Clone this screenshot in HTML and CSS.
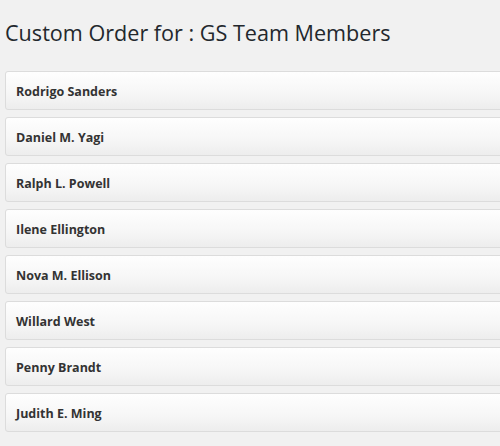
FILE: index.html
```html
<!DOCTYPE html>
<html>
<head>
<meta charset="utf-8">
<link rel="stylesheet" href="styles.css">
</head>
<body>
<div class="wrap">
  <h1 class="title">Custom Order for : GS Team Members</h1>
  <ul class="list">
    <li class="item">Rodrigo Sanders</li>
    <li class="item">Daniel M. Yagi</li>
    <li class="item">Ralph L. Powell</li>
    <li class="item">Ilene Ellington</li>
    <li class="item">Nova M. Ellison</li>
    <li class="item">Willard West</li>
    <li class="item">Penny Brandt</li>
    <li class="item">Judith E. Ming</li>
  </ul>
</div>
</body>
</html>
```
FILE: styles.css
```css
html, body {
  margin: 0;
  padding: 0;
  background: #f1f1f1;
  overflow: hidden;
}
.wrap {
  padding: 0 0 0 5px;
  width: 520px;
}
.title {
  margin: 0;
  padding: 19px 0 0 0;
  height: 71px;
  box-sizing: border-box;
  font-family: "Open Sans", sans-serif;
  font-weight: 400;
  font-size: 21.6px;
  line-height: 28px;
  color: #23282d;
}
.list {
  list-style: none;
  margin: 0;
  padding: 0;
  display: flex;
  flex-direction: column;
  gap: 7px;
}
.item {
  height: 39px;
  box-sizing: border-box;
  border: 1px solid #dcdcdc;
  border-radius: 3px;
  background: linear-gradient(to bottom, #fefefe 0%, #f6f6f6 60%, #ededed 100%);
  padding: 2px 0 0 10px;
  display: flex;
  align-items: center;
  font-family: "Open Sans", sans-serif;
  font-weight: 700;
  font-size: 12.5px;
  color: #333;
}
```
